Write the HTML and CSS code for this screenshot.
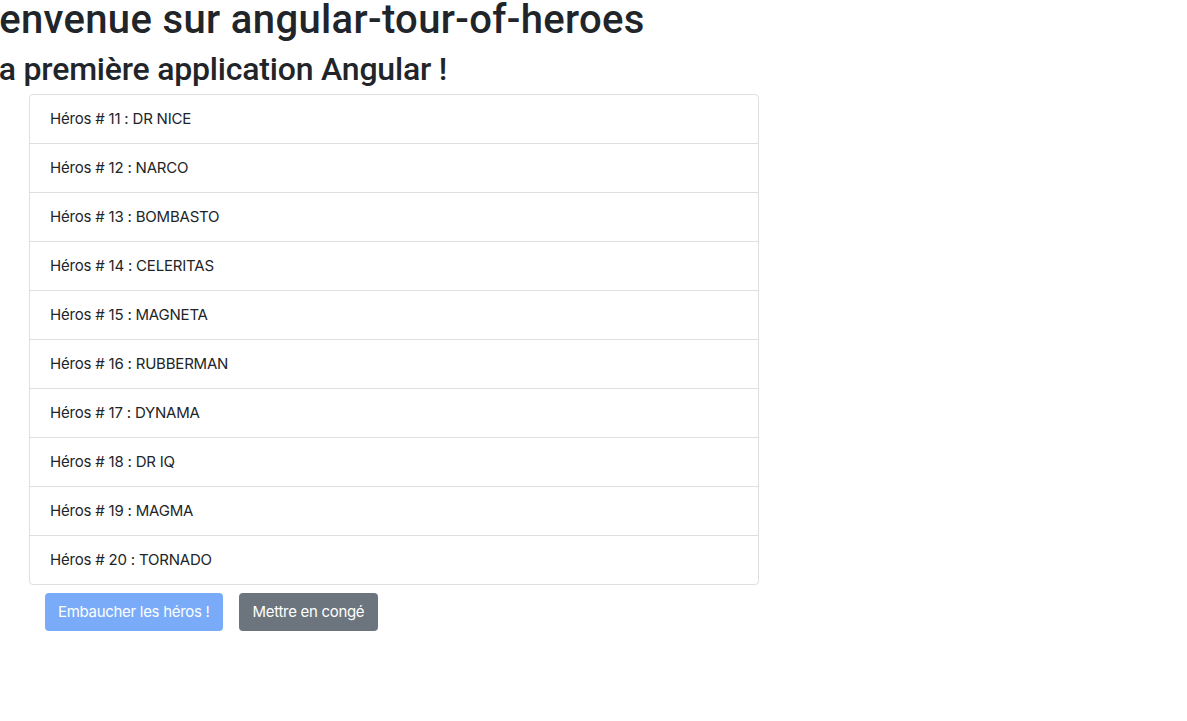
FILE: index.html
```html
<!DOCTYPE html>
<html lang="fr">
<head>
<meta charset="utf-8">
<title>AngularTourOfHeroes</title>
<link rel="stylesheet" href="styles.css">
</head>
<body>
<header class="titles">
  <h1 class="title-main">Bienvenue sur angular-tour-of-heroes</h1>
  <h2 class="title-sub">Ma première application Angular !</h2>
</header>
<main class="content">
  <ul class="hero-list">
    <li class="hero-item">Héros # 11 : DR NICE</li>
    <li class="hero-item">Héros # 12 : NARCO</li>
    <li class="hero-item">Héros # 13 : BOMBASTO</li>
    <li class="hero-item">Héros # 14 : CELERITAS</li>
    <li class="hero-item">Héros # 15 : MAGNETA</li>
    <li class="hero-item">Héros # 16 : RUBBERMAN</li>
    <li class="hero-item">Héros # 17 : DYNAMA</li>
    <li class="hero-item">Héros # 18 : DR IQ</li>
    <li class="hero-item">Héros # 19 : MAGMA</li>
    <li class="hero-item">Héros # 20 : TORNADO</li>
  </ul>
  <div class="actions">
    <button class="btn btn-primary" disabled>Embaucher les héros !</button>
    <button class="btn btn-secondary">Mettre en congé</button>
  </div>
</main>
</body>
</html>
```

FILE: styles.css
```css
html, body {
  margin: 0;
  padding: 0;
  background: #fff;
}
body {
  font-family: Inter, "Liberation Sans", Arial, sans-serif;
  color: #212529;
  font-size: 16px;
  line-height: 1.5;
}
.titles {
  display: flex;
  flex-direction: column;
}
.title-main {
  font-family: Roboto, Inter, sans-serif;
  font-size: 40px;
  font-weight: 500;
  line-height: 1.2;
  letter-spacing: 0.35px;
  margin: -4px 0 6px -37px;
  white-space: nowrap;
}
.title-sub {
  font-family: Roboto, Inter, sans-serif;
  font-size: 32px;
  font-weight: 500;
  line-height: 1.2;
  letter-spacing: -0.2px;
  margin: 0 0 6px -29px;
  white-space: nowrap;
}
.content {
  padding-left: 29px;
  width: 730px;
}
.hero-list {
  list-style: none;
  margin: 0;
  padding: 0;
  border: 1px solid #dfdfdf;
  border-radius: 4px;
}
.hero-item {
  padding: 12px 20px;
  font-size: 15px;
  line-height: 24px;
  letter-spacing: -0.2px;
}
.hero-item + .hero-item {
  border-top: 1px solid #dfdfdf;
}
.actions {
  display: flex;
  gap: 16px;
  padding: 8px 16px;
}
.btn {
  font-family: inherit;
  font-size: 15px;
  line-height: 24px;
  letter-spacing: -0.3px;
  padding: 7px 13px;
  border: none;
  border-radius: 4px;
  color: #fff;
}
.btn-primary {
  background: #7aabf8;
}
.btn-secondary {
  background: #6c757d;
  padding: 7px 14px;
}
```
